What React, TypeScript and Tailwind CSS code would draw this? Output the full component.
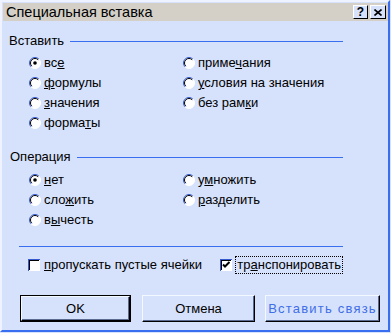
const bg = "bg-[#d6e2fb]";

function Radio({ checked }: { checked?: boolean }) {
  return (
    <svg width="12" height="12" viewBox="0 0 12 12" className="shrink-0">
      <circle cx="6" cy="6" r="5.5" fill="#fff" />
      <path d="M2.1 9.9A5.5 5.5 0 0 1 9.9 2.1" fill="none" stroke="#3458d0" />
      <path d="M2.8 9.2A4.5 4.5 0 0 1 9.2 2.8" fill="none" stroke="#000" />
      <path d="M9.9 2.1A5.5 5.5 0 0 1 2.1 9.9" fill="none" stroke="#fff" />
      {checked && <circle cx="6" cy="6" r="1.8" fill="#000" />}
    </svg>
  );
}

function Check({ checked }: { checked?: boolean }) {
  return (
    <svg width="12" height="12" viewBox="0 0 12 12" className="shrink-0" shapeRendering="crispEdges">
      <rect x="0" y="0" width="12" height="12" fill="#fff" />
      <path d="M0.5 12V0.5H12" fill="none" stroke="#3458d0" />
      <path d="M1.5 11V1.5H11" fill="none" stroke="#000" />
      {checked && (
        <polyline points="3,5.5 5,7.5 9.5,3" fill="none" stroke="#000" strokeWidth="2" shapeRendering="auto" />
      )}
    </svg>
  );
}

function Opt({ children, checked }: { children: React.ReactNode; checked?: boolean }) {
  return (
    <div className="flex h-5 items-center gap-[3px]">
      <Radio checked={checked} />
      <span>{children}</span>
    </div>
  );
}

function Heading({ title }: { title: string }) {
  return (
    <div className="flex h-4 items-center">
      <span>{title}</span>
      <div className="ml-[6px] h-px flex-1 bg-[#3a6ef0]" />
    </div>
  );
}

function Btn({ children, w, def, disabled }: { children: React.ReactNode; w: string; def?: boolean; disabled?: boolean }) {
  const inner = (
    <div
      className={`flex h-full items-center justify-center border border-t-[#f4f8ff] border-l-[#f4f8ff] border-r-black border-b-black shadow-[inset_-1px_-1px_#5a6a90] ${
        disabled ? "tracking-[1.2px] text-[#3f6ee8]" : "text-black"
      }`}
    >
      {children}
    </div>
  );
  return def ? (
    <div className={`${w} h-[27px] border border-black`}>{inner}</div>
  ) : (
    <div className={`${w} h-[27px]`}>{inner}</div>
  );
}

export default function App() {
  return (
    <div className={`h-[333px] w-[391px] ${bg} font-['Liberation_Sans',Arial,sans-serif] text-[13px] leading-4 text-black`}>
      <div className="h-[332px] w-[390px] border-2 border-t-[#eef3ff] border-l-[#eef3ff] border-r-[#3a6ef0] border-b-[#3a6ef0] pl-px pt-px">
        {/* title */}
        <div className="flex h-[18px] items-center bg-[#d4d0c8] pl-[3px] pr-[2px]">
          <span className="flex-1 text-[14.5px]">Специальная вставка</span>
          <div className="flex gap-[2px]">
            <div className={`flex h-[14px] w-[15px] items-center justify-center border border-t-white border-l-white border-r-black border-b-black ${bg} text-[12px] font-bold leading-none`}>
              ?
            </div>
            <div className={`flex h-[14px] w-[16px] items-center justify-center border border-t-white border-l-white border-r-black border-b-black ${bg}`}>
              <svg width="8" height="7" viewBox="0 0 8 7">
                <path d="M0.5 0.5L7.5 6.5M7.5 0.5L0.5 6.5" stroke="#000" strokeWidth="1.6" />
              </svg>
            </div>
          </div>
        </div>

        <div className="pl-[6px] pt-[12px]">
          <div className="w-[334px]">
            <Heading title="Вставить" />
            <div className="mt-[4px] flex pl-[20px]">
              <div className="w-[154px]">
                <Opt checked>
                  вс<u>е</u>
                </Opt>
                <Opt>
                  <u>ф</u>ормулы
                </Opt>
                <Opt>
                  <u>з</u>начения
                </Opt>
                <Opt>
                  форма<u>т</u>ы
                </Opt>
              </div>
              <div>
                <Opt>
                  приме<u>ч</u>ания
                </Opt>
                <Opt>
                  <u>у</u>словия на значения
                </Opt>
                <Opt>
                  без рам<u>к</u>и
                </Opt>
              </div>
            </div>

            <div className="mt-[16px] pl-px">
              <Heading title="Операция" />
            </div>
            <div className="mt-[5px] flex pl-[20px]">
              <div className="w-[154px]">
                <Opt checked>
                  <u>н</u>ет
                </Opt>
                <Opt>
                  сло<u>ж</u>ить
                </Opt>
                <Opt>
                  в<u>ы</u>честь
                </Opt>
              </div>
              <div>
                <Opt>
                  у<u>м</u>ножить
                </Opt>
                <Opt>
                  <u>р</u>азделить
                </Opt>
              </div>
            </div>

            <div className="ml-[10px] mt-[16px] h-px bg-[#3a6ef0]" />

            <div className="mt-[9px] flex h-[18px] items-center pl-[19px]">
              <div className="flex w-[199px] items-center gap-[4px]">
                <Check />
                <span>
                  <u>п</u>ропускать пустые ячейки
                </span>
              </div>
              <div className="flex items-center gap-[3px]">
                <Check checked />
                <span className="border border-dotted border-black px-px leading-4">
                  тр<u>а</u>нспонировать
                </span>
              </div>
            </div>
          </div>

          <div className="mt-[21px] flex pl-[11px]">
            <Btn w="w-[111px]" def>
              OK
            </Btn>
            <div className="ml-[11px]">
              <Btn w="w-[113px]">Отмена</Btn>
            </div>
            <div className="ml-[10px]">
              <Btn w="w-[115px]" disabled>
                Вставить связь
              </Btn>
            </div>
          </div>
        </div>
      </div>
    </div>
  );
}
